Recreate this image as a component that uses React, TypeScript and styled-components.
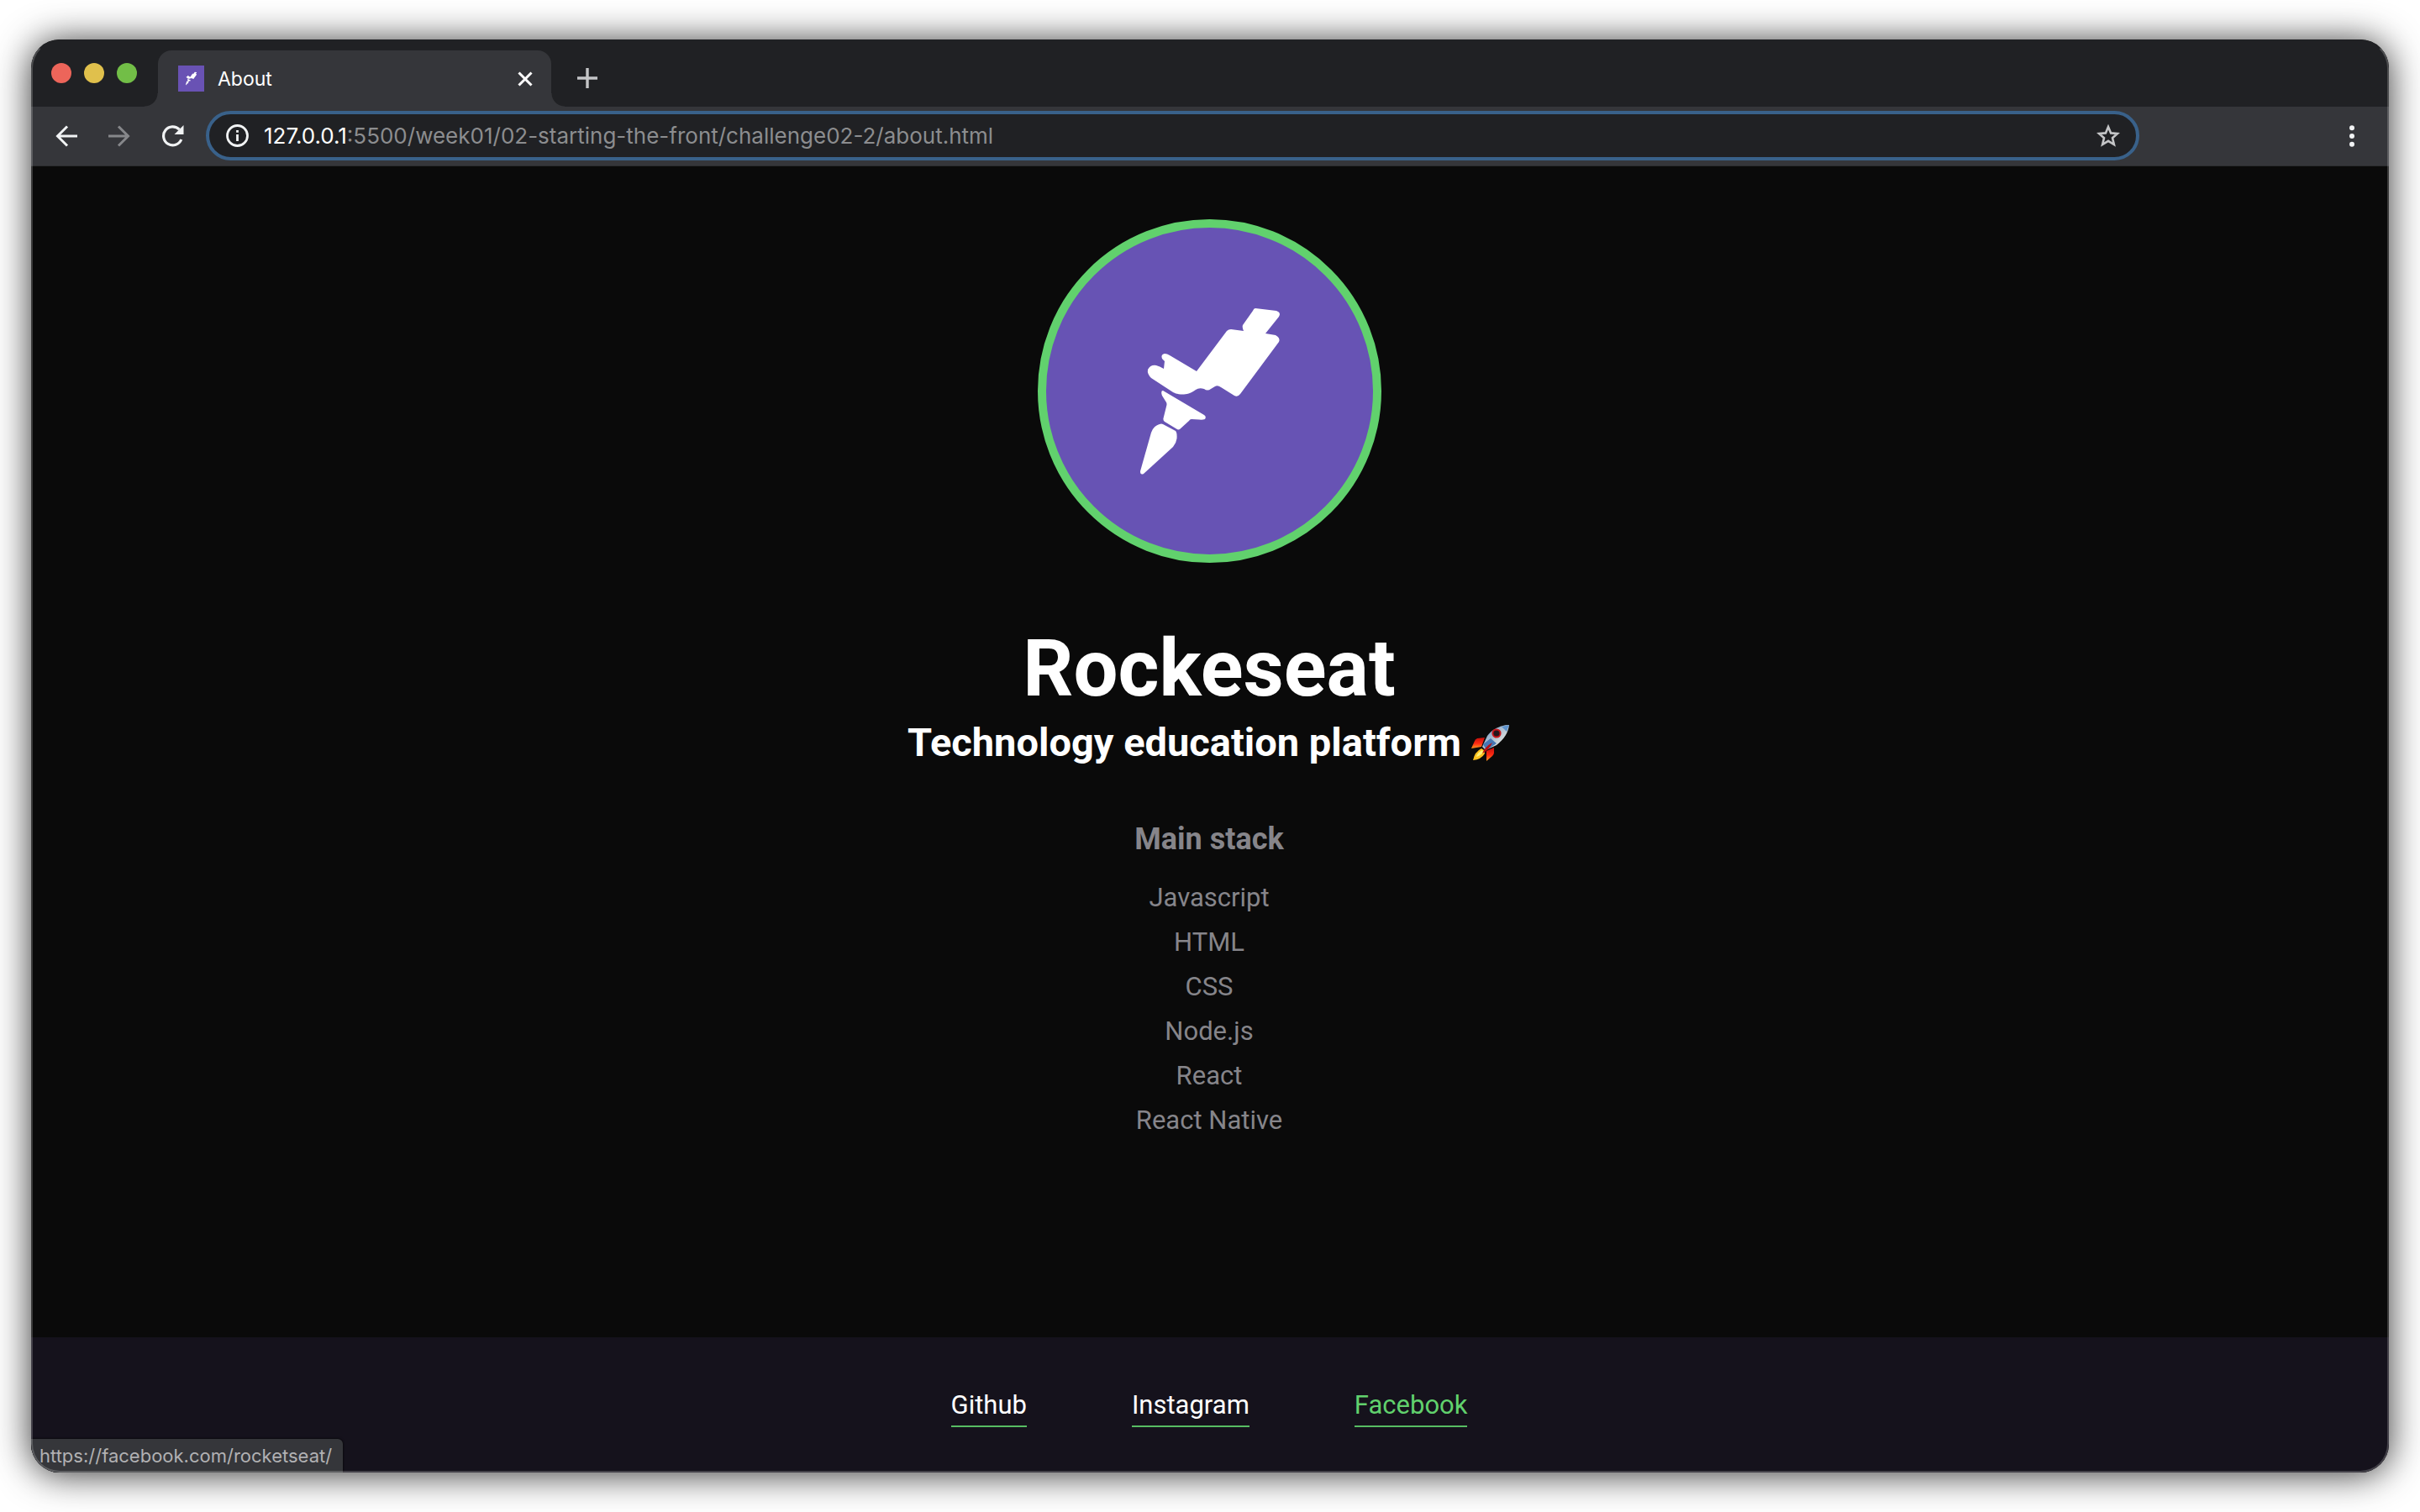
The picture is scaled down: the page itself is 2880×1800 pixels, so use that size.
import React from "react";
import styled, { createGlobalStyle, css } from "styled-components";

const ui = `Inter, Roboto, "Liberation Sans", sans-serif`;
const body = `Roboto, "Liberation Sans", sans-serif`;

const GlobalStyle = createGlobalStyle`
  *, *::before, *::after { box-sizing: border-box; margin: 0; padding: 0; }
  body { background: #fff; font-family: ${body}; }
  button, input { font: inherit; color: inherit; background: none; border: 0; outline: 0; }
  ul { list-style: none; }
`;

const Desktop = styled.div`
  display: flex;
  min-height: 100vh;
  padding: 47px 37px;
`;

const Shade = styled.div`
  flex: 1;
  display: flex;
  border-radius: 34px;
  box-shadow: 0 2px 44px rgba(0, 0, 0, 0.8);
`;

const Window = styled.div`
  position: relative;
  flex: 1;
  display: flex;
  flex-direction: column;
  overflow: hidden;
  border-radius: 34px;
  background: #0a0a0a;
`;

const Rim = styled.div`
  position: absolute;
  inset: 0;
  border: 2px solid rgba(255, 255, 255, 0.2);
  border-top-color: transparent;
  border-radius: 34px;
  pointer-events: none;
`;

const TabStrip = styled.div`
  display: flex;
  align-items: flex-end;
  height: 80px;
  background: #202124;
`;

const Lights = styled.div`
  display: flex;
  gap: 15px;
  align-self: center;
  width: 151px;
  padding-left: 24px;
`;

const Light = styled.button<{ $color: string }>`
  width: 24px;
  height: 24px;
  border-radius: 50%;
  background: ${(p) => p.$color};
`;

const flare = css`
  content: "";
  position: absolute;
  bottom: 0;
  width: 16px;
  height: 16px;
`;

const Tab = styled.div`
  position: relative;
  display: flex;
  align-items: center;
  width: 468px;
  height: 67px;
  padding: 0 18px 0 24px;
  border-radius: 16px 16px 0 0;
  background: #35363a;
  &::before {
    ${flare}
    left: -16px;
    background: radial-gradient(circle at 0 0, transparent 15px, #35363a 16px);
  }
  &::after {
    ${flare}
    right: -16px;
    background: radial-gradient(circle at 100% 0, transparent 15px, #35363a 16px);
  }
`;

const Favicon = styled.span`
  display: flex;
  width: 31px;
  height: 31px;
  margin-right: 16px;
  background: #6952b4;
`;

const TabTitle = styled.span`
  flex: 1;
  color: #fff;
  font: 400 23px/32px ${ui};
`;

const IconButton = styled.button<{ $size?: number }>`
  display: flex;
  align-items: center;
  justify-content: center;
  width: ${(p) => p.$size ?? 32}px;
  height: ${(p) => p.$size ?? 32}px;
`;

const NewTab = styled(IconButton)`
  align-self: center;
  margin: 12px 0 0 27px;
`;

const Toolbar = styled.div`
  display: flex;
  align-items: center;
  height: 71px;
  padding: 0 28px 1px 22px;
  background: #35363a;
  border-bottom: 1px solid #2b2c2f;
`;

const NavButtons = styled.div`
  display: flex;
  gap: 23px;
  width: 186px;
`;

const AddressBar = styled.label`
  flex: 1;
  display: flex;
  align-items: center;
  height: 59px;
  margin-right: 237px;
  padding: 0 17px;
  border: 4px solid #39618a;
  border-radius: 30px;
  background: #202124;
  font: 400 26px/36px ${ui};
`;

const Host = styled.span`
  padding-left: 16px;
  color: #fff;
`;

const Path = styled.input`
  flex: 1;
  height: 36px;
  color: #8c8d8f;
`;

const Main = styled.main`
  flex: 1;
  display: flex;
  flex-direction: column;
  align-items: center;
  padding: 63px 2px 0 0;
`;

const Avatar = styled.div`
  display: flex;
  width: 409px;
  height: 409px;
  border: 10px solid #61d16d;
  border-radius: 50%;
  background: #6753b4;
`;

const Name = styled.h1`
  margin-top: 71px;
  color: #fff;
  font: 700 94px/110px ${body};
`;

const Tagline = styled.h2`
  display: flex;
  align-items: center;
  gap: 11px;
  color: #fff;
  font: 700 47px/66px ${body};
`;

const StackTitle = styled.h3`
  margin-top: 60px;
  color: #86858a;
  font: 700 36px/44px ${body};
`;

const Stack = styled.ul`
  display: flex;
  flex-direction: column;
  align-items: center;
  gap: 17px;
  margin-top: 30px;
  color: #86858a;
  font: 400 31px/36px ${body};
`;

const Footer = styled.footer`
  display: flex;
  justify-content: center;
  gap: 125px;
  height: 161px;
  padding: 62px 2px 0 0;
  background: #15121c;
`;

const FooterLink = styled.a<{ $active?: boolean }>`
  height: 45px;
  border-bottom: 2px solid #57bd63;
  color: ${(p) => (p.$active ? "#61d16d" : "#fff")};
  font: 400 31px/38px ${body};
  text-decoration: none;
`;

const Status = styled.div`
  position: absolute;
  left: 0;
  bottom: 0;
  height: 40px;
  padding: 0 13px 0 10px;
  border-radius: 0 6px 0 0;
  background: #35363a;
  box-shadow: 0 0 3px #000;
  color: #b1b1b3;
  font: 400 22px/41px ${ui};
`;

function Ship({ size }: { size: number }) {
  return (
    <svg width={size} height={size} viewBox="1245 271 389 389" fill="#fff" aria-hidden="true">
      <path d="M1494 367 L1519 370 Q1525 372 1522 377 L1506 397 L1518 399 Q1524 402 1522 407 L1476 469 Q1473 473 1469 471 L1453 461 Q1449 458 1446 460 L1441 463 Q1437 466 1433 463 Q1427 461 1423 464 C1416 469 1410 470 1405 469.500 C1399 469 1396 467 1393 465 L1370 450 Q1365 445 1366 440 Q1369 434 1376 435 Q1380 436 1385 439 L1386 430 L1383 427 Q1381 422 1386 421 Q1389 421 1392 423 L1424 442 L1460 394 Q1462 392 1465 392 L1480 394 Q1478 389 1479 387 L1491 370 Q1492 367 1494 367 Z" />
      <path d="M1384 465 L1433 494 Q1436 496 1434 499 Q1431 500 1427 499.500 L1418 499 Q1416 499 1415 501 L1404 511 Q1402 512 1400 510.500 L1386 502 Q1384 501 1384.500 498 L1388 484 Q1389 481 1388 479 L1383 471 Q1381 465 1384 465 Z" />
      <path d="M1384 505 L1399 513 Q1401 515 1400.500 522 Q1400 527 1396 532 L1361 564 Q1357 566 1357 561 L1370 515 Q1373 506 1382 504.500 Z" />
    </svg>
  );
}

function RocketEmoji() {
  return (
    <svg width="48" height="48" viewBox="0 0 48 48" role="img" aria-label="rocket">
      <defs>
        <linearGradient id="hull" x1="0" y1="0" x2="1" y2="1">
          <stop offset="0" stopColor="#5b8fc8" />
          <stop offset="0.45" stopColor="#aebfd0" />
          <stop offset="0.75" stopColor="#e4e4e0" />
          <stop offset="1" stopColor="#5f6f85" />
        </linearGradient>
        <linearGradient id="fin" x1="0" y1="0" x2="0" y2="1">
          <stop offset="0" stopColor="#c40f0c" />
          <stop offset="0.55" stopColor="#ff2a12" />
          <stop offset="1" stopColor="#ff9a1f" />
        </linearGradient>
      </defs>
      <path d="M17 18 L8 19 Q6 20 5 22 L1 31 L13 29 Z" fill="url(#fin)" />
      <path d="M28 30 L28 36 Q28 38 26 40 L19 46 L19 34 Z" fill="url(#fin)" />
      <path d="M46 3 C36 3 26 8 20 16 L14 29 L18 33 L31 27 C40 20 45 12 46 3 Z" fill="url(#hull)" />
      <path d="M46 3 L37 5 L43 11 Z" fill="#5f93cd" />
      <path d="M15 26 L24 19 L31 25 L19 33 Z" fill="#4677b4" />
      <circle cx="31" cy="13" r="5.600" fill="#c9161b" />
      <circle cx="31" cy="13" r="3.600" fill="#26161c" />
      <path d="M13 31 Q5 35 3 45 Q13 44 17 37 L16 33 Z" fill="#ffc21f" />
      <path d="M14 33 Q8 36 7 41 Q13 39 15 35 Z" fill="#fff27a" />
      <path d="M26 24 Q17 29 14 37 Q22 33 26 24 Z" fill="#b90f12" />
    </svg>
  );
}

const stack = ["Javascript", "HTML", "CSS", "Node.js", "React", "React Native"];

export default function App() {
  return (
    <Desktop>
      <GlobalStyle />
      <Shade>
        <Window>
          <TabStrip>
            <Lights>
              <Light $color="#ed655a" aria-label="Close window" />
              <Light $color="#e0c04c" aria-label="Minimize window" />
              <Light $color="#72be47" aria-label="Zoom window" />
            </Lights>
            <Tab>
              <Favicon>
                <Ship size={31} />
              </Favicon>
              <TabTitle>About</TabTitle>
              <IconButton $size={26} aria-label="Close tab">
                <svg width="18" height="18" viewBox="0 0 18 18" stroke="#fff" strokeWidth="3">
                  <path d="M1.500 1.500 L16.500 16.500 M16.500 1.500 L1.500 16.500" />
                </svg>
              </IconButton>
            </Tab>
            <NewTab aria-label="New tab">
              <svg width="24" height="24" viewBox="0 0 24 24" stroke="#c4c5c7" strokeWidth="3.400">
                <path d="M12 0 V24 M0 12 H24" />
              </svg>
            </NewTab>
          </TabStrip>
          <Toolbar>
            <NavButtons>
              <IconButton $size={40} aria-label="Back">
                <svg width="26" height="26" viewBox="0 0 26 26" fill="none" stroke="#f1f3f4" strokeWidth="3">
                  <path d="M26 13 H2 M14 1.500 L2.500 13 L14 24.500" />
                </svg>
              </IconButton>
              <IconButton $size={40} aria-label="Forward">
                <svg width="26" height="26" viewBox="0 0 26 26" fill="none" stroke="#86878a" strokeWidth="3">
                  <path d="M0 13 H24 M12 1.500 L23.500 13 L12 24.500" />
                </svg>
              </IconButton>
              <IconButton $size={40} aria-label="Reload">
                <svg width="27" height="26" viewBox="0 0 27 26" fill="none" stroke="#f1f3f4" strokeWidth="3.200">
                  <path d="M23.800 17 A11 11 0 1 1 21.500 5.200" />
                  <path d="M26.500 0 V11 H15.500 Z" fill="#f1f3f4" stroke="none" />
                </svg>
              </IconButton>
            </NavButtons>
            <AddressBar>
              <IconButton as="span" aria-hidden="true">
                <svg width="27" height="27" viewBox="0 0 27 27" fill="none" stroke="#f1f3f4" strokeWidth="2.800">
                  <circle cx="13.500" cy="13.500" r="12" />
                  <path d="M13.500 12 V20 M13.500 7 V9.800" />
                </svg>
              </IconButton>
              <Host>127.0.0.1</Host>
              <Path
                type="text"
                aria-label="Address"
                defaultValue=":5500/week01/02-starting-the-front/challenge02-2/about.html"
              />
              <IconButton aria-label="Bookmark this tab">
                <svg width="28" height="27" viewBox="0 0 28 27" fill="none" stroke="#c4c5c7" strokeWidth="2.600">
                  <path d="M14 3 L17.100 10.400 L25 11 L19 16.200 L20.900 24 L14 19.800 L7.100 24 L9 16.200 L3 11 L10.900 10.400 Z" />
                </svg>
              </IconButton>
            </AddressBar>
            <IconButton aria-label="Menu">
              <svg width="6" height="26" viewBox="0 0 6 26" fill="#f1f3f4">
                <circle cx="3" cy="3.200" r="3" />
                <circle cx="3" cy="13" r="3" />
                <circle cx="3" cy="22.800" r="3" />
              </svg>
            </IconButton>
          </Toolbar>
          <Main>
            <Avatar>
              <Ship size={389} />
            </Avatar>
            <Name>Rockeseat</Name>
            <Tagline>
              Technology education platform <RocketEmoji />
            </Tagline>
            <StackTitle>Main stack</StackTitle>
            <Stack>
              {stack.map((item) => (
                <li key={item}>{item}</li>
              ))}
            </Stack>
          </Main>
          <Footer>
            <FooterLink href="#github">Github</FooterLink>
            <FooterLink href="#instagram">Instagram</FooterLink>
            <FooterLink href="https://facebook.com/rocketseat/" $active>
              Facebook
            </FooterLink>
          </Footer>
          <Status>https://facebook.com/rocketseat/</Status>
          <Rim />
        </Window>
      </Shade>
    </Desktop>
  );
}
